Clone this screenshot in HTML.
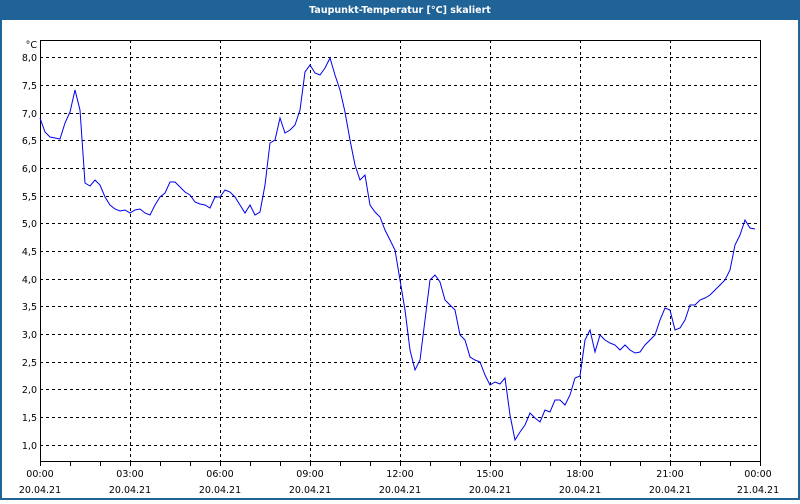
<!DOCTYPE html><html><head><style>
body{margin:0;width:800px;height:500px;overflow:hidden;background:#fff;font-family:"DejaVu Sans","Liberation Sans",sans-serif}
</style></head><body>
<svg width="800" height="500" xmlns="http://www.w3.org/2000/svg" font-family="DejaVu Sans, Liberation Sans, sans-serif" font-size="9.5">
<rect x="0" y="0" width="800" height="500" fill="#1f6397"/>
<rect x="2" y="20" width="796" height="478" fill="#fff"/>
<text x="400" y="13" fill="#fff" font-weight="bold" text-anchor="middle" font-size="9.5">Taupunkt-Temperatur [°C] skaliert</text>
<g stroke="#000" stroke-dasharray="3,3" stroke-width="1">
<path d="M130.5 40V461M220.5 40V461M310.5 40V461M400.5 40V461M490.5 40V461M580.5 40V461M670.5 40V461"/>
<path d="M40 57.5H760M40 85.5H760M40 113.5H760M40 140.5H760M40 168.5H760M40 196.5H760M40 223.5H760M40 251.5H760M40 279.5H760M40 306.5H760M40 334.5H760M40 362.5H760M40 389.5H760M40 417.5H760M40 445.5H760"/>
</g>
<rect x="40.5" y="40.5" width="720" height="421" fill="none" stroke="#000"/>
<path stroke="#000" d="M40.5 461V466M70.5 461V466M100.5 461V466M130.5 461V466M160.5 461V466M190.5 461V466M220.5 461V466M250.5 461V466M280.5 461V466M310.5 461V466M340.5 461V466M370.5 461V466M400.5 461V466M430.5 461V466M460.5 461V466M490.5 461V466M520.5 461V466M550.5 461V466M580.5 461V466M610.5 461V466M640.5 461V466M670.5 461V466M700.5 461V466M730.5 461V466M760.5 461V466"/>
<polyline fill="none" stroke="#0000ee" stroke-width="1" points="40,118 45,132 50,137 55,138 60,139 65,123 70,112 75,90 80,110 85,183 90,186 95,180 100,185 105,197 110,205 115,209 120,211 125,210 130,213 135,210 140,209 145,213 150,215 155,205 160,197 165,193 170,182 175,182 180,187 185,192 190,195 195,202 200,204 205,205 210,208 215,197 220,197 225,190 230,192 235,197 240,205 245,213 250,205 255,215 260,212 265,185 270,143 275,140 280,118 285,133 290,130 295,125 300,110 305,72 310,65 315,73 320,75 325,68 330,58 335,75 340,90 345,112 350,140 355,165 360,180 365,175 370,205 375,212 380,217 385,230 390,240 395,250 400,280 405,310 410,350 415,370 420,360 425,320 430,280 435,275 440,282 445,300 450,305 455,310 460,335 465,340 470,357 475,360 480,362 485,375 490,385 495,382 500,384 505,378 510,415 515,440 520,432 525,425 530,413 535,418 540,422 545,410 550,412 555,400 560,400 565,405 570,395 575,378 580,376 585,340 590,330 595,352 600,335 605,340 610,343 615,345 620,350 625,345 630,350 635,353 640,352 645,345 650,340 655,335 660,320 665,308 670,310 675,330 680,328 685,320 690,305 695,305 700,300 705,298 710,295 715,290 720,285 725,280 730,270 735,245 740,235 745,220 750,228 755,229"/>
<g fill="#000" text-anchor="end">
<text x="37" y="48">°C</text>
<text x="37" y="61">8,0</text><text x="37" y="89">7,5</text><text x="37" y="117">7,0</text><text x="37" y="144">6,5</text><text x="37" y="172">6,0</text><text x="37" y="200">5,5</text><text x="37" y="227">5,0</text><text x="37" y="255">4,5</text><text x="37" y="283">4,0</text><text x="37" y="310">3,5</text><text x="37" y="338">3,0</text><text x="37" y="366">2,5</text><text x="37" y="393">2,0</text><text x="37" y="421">1,5</text><text x="37" y="449">1,0</text>
</g>
<g fill="#000" text-anchor="middle">
<text x="40" y="477">00:00</text><text x="40" y="493">20.04.21</text>
<text x="130" y="477">03:00</text><text x="130" y="493">20.04.21</text>
<text x="220" y="477">06:00</text><text x="220" y="493">20.04.21</text>
<text x="310" y="477">09:00</text><text x="310" y="493">20.04.21</text>
<text x="400" y="477">12:00</text><text x="400" y="493">20.04.21</text>
<text x="490" y="477">15:00</text><text x="490" y="493">20.04.21</text>
<text x="580" y="477">18:00</text><text x="580" y="493">20.04.21</text>
<text x="670" y="477">21:00</text><text x="670" y="493">20.04.21</text>
<text x="758" y="477">00:00</text><text x="758" y="493">21.04.21</text>
</g>
</svg>
</body></html>
